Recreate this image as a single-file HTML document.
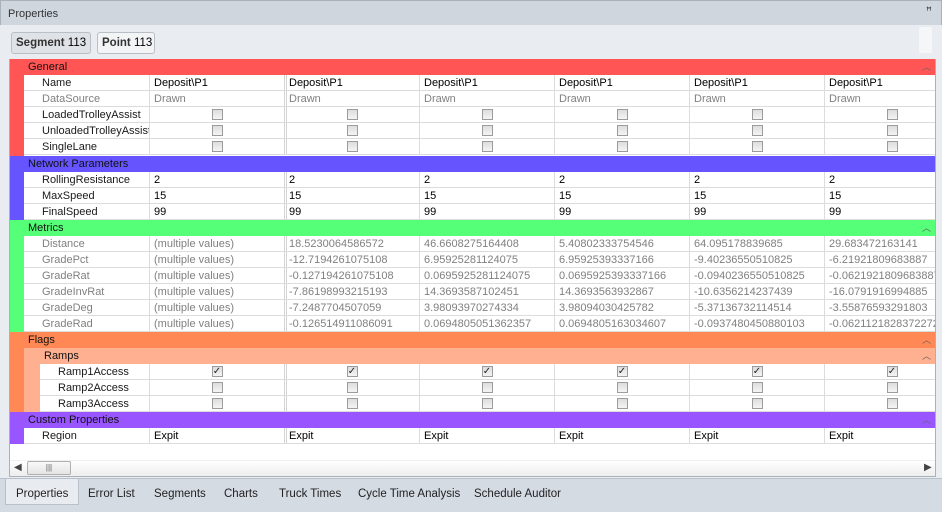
<!DOCTYPE html>
<html><head><meta charset="utf-8"><style>
*{box-sizing:border-box;margin:0;padding:0}
body{width:942px;height:512px;position:relative;overflow:hidden;background:#e9ecf0;font-family:"Liberation Sans",sans-serif;font-size:11px;color:#000}
.abs{position:absolute}
.title{left:0;top:0;width:942px;height:25px;background:#cfd6de;border:1px solid #a9b1bb;border-bottom:none}
.title span{position:absolute;left:7px;top:7px;color:#333}
.btn{top:32px;height:22px;border:1px solid #b9bfc6;border-radius:3px;padding:4px 4px 0 4px;font-size:11.5px;background:#f3f4f6;white-space:nowrap}
.btn b{color:#333}
.grid{left:9px;top:59px;width:927px;height:418px;background:#fff;border:1px solid #a9b1bb;border-top:none;overflow:hidden}
.row{position:absolute;left:14px;width:913px;height:16px;border-bottom:1px solid #dcdcdc;display:flex;background:#fff;white-space:nowrap;overflow:hidden}
.row div{height:15px;line-height:16px;overflow:hidden;flex-shrink:0}
.lb{width:125px;padding-left:18px;color:#1a1a1a}
.v{width:135px;border-left:1px solid #dcdcdc;padding-left:4px}
.v1{border-left:1px solid #dcdcdc}
.v2{border-left:3px double #d4d4d4;padding-left:2px}
.g div.v,.g .lb{color:#808080}
.cat{position:absolute;left:0;width:927px;height:16px;line-height:16px;padding-left:18px;color:#111}
.cat i{position:absolute;right:6px;top:0;font-style:normal;font-size:9px;color:#666}
.strip{position:absolute;left:0;width:14px}
.cb{display:block;width:11px;height:11px;margin:2px auto 0;border:1px solid #9c9c9c;background:linear-gradient(#ddd,#f4f4f4);position:relative;left:-2px;font-size:10px;line-height:9px;text-align:center;color:#222}
.tabs{left:0;top:478px;width:942px;height:34px;background:#d5dbe3;border-top:1px solid #b8c0ca}
.tab{position:absolute;top:9px;font-size:11.5px;color:#222}
</style></head><body>
<div class="abs title"><span>Properties</span><span style="left:925px;top:5px;font-size:10px">ꟸ</span></div>
<div class="abs" style="left:8px;top:25px;width:928px;height:34px;background:#e9ecf0"></div>
<div class="abs btn" style="left:11px;width:80px;background:#dfe3e8"><b>Segment</b> 113</div>
<div class="abs btn" style="left:97px;width:58px"><b>Point</b> 113</div>
<div class="abs" style="left:919px;top:27px;width:13px;height:26px;background:#f5f6f8"></div>

<div class="abs grid">
<div class="strip" style="top:0;height:97px;background:#ff5555"></div>
<div class="cat" style="top:0;background:#ff5555">General<i>︿</i></div>
<div class="row" style="top:16px"><div class="lb">Name</div><div class="v v1">Deposit\P1</div><div class="v v2">Deposit\P1</div><div class="v">Deposit\P1</div><div class="v">Deposit\P1</div><div class="v">Deposit\P1</div><div class="v">Deposit\P1</div></div>
<div class="row g" style="top:32px"><div class="lb">DataSource</div><div class="v v1">Drawn</div><div class="v v2">Drawn</div><div class="v">Drawn</div><div class="v">Drawn</div><div class="v">Drawn</div><div class="v">Drawn</div></div>
<div class="row" style="top:48px"><div class="lb">LoadedTrolleyAssist</div><div class="v v1"><span class="cb"></span></div><div class="v v2"><span class="cb"></span></div><div class="v"><span class="cb"></span></div><div class="v"><span class="cb"></span></div><div class="v"><span class="cb"></span></div><div class="v"><span class="cb"></span></div></div>
<div class="row" style="top:64px"><div class="lb">UnloadedTrolleyAssist</div><div class="v v1"><span class="cb"></span></div><div class="v v2"><span class="cb"></span></div><div class="v"><span class="cb"></span></div><div class="v"><span class="cb"></span></div><div class="v"><span class="cb"></span></div><div class="v"><span class="cb"></span></div></div>
<div class="row" style="top:80px"><div class="lb">SingleLane</div><div class="v v1"><span class="cb"></span></div><div class="v v2"><span class="cb"></span></div><div class="v"><span class="cb"></span></div><div class="v"><span class="cb"></span></div><div class="v"><span class="cb"></span></div><div class="v"><span class="cb"></span></div></div>

<div class="strip" style="top:97px;height:64px;background:#6655ff"></div>
<div class="cat" style="top:97px;background:#6655ff">Network Parameters</div>
<div class="row" style="top:113px"><div class="lb">RollingResistance</div><div class="v v1">2</div><div class="v v2">2</div><div class="v">2</div><div class="v">2</div><div class="v">2</div><div class="v">2</div></div>
<div class="row" style="top:129px"><div class="lb">MaxSpeed</div><div class="v v1">15</div><div class="v v2">15</div><div class="v">15</div><div class="v">15</div><div class="v">15</div><div class="v">15</div></div>
<div class="row" style="top:145px"><div class="lb">FinalSpeed</div><div class="v v1">99</div><div class="v v2">99</div><div class="v">99</div><div class="v">99</div><div class="v">99</div><div class="v">99</div></div>

<div class="strip" style="top:161px;height:112px;background:#55ff77"></div>
<div class="cat" style="top:161px;background:#55ff77">Metrics<i>︿</i></div>
<div class="row g" style="top:177px"><div class="lb">Distance</div><div class="v v1">(multiple values)</div><div class="v v2">18.5230064586572</div><div class="v">46.6608275164408</div><div class="v">5.40802333754546</div><div class="v">64.095178839685</div><div class="v">29.683472163141</div></div>
<div class="row g" style="top:193px"><div class="lb">GradePct</div><div class="v v1">(multiple values)</div><div class="v v2">-12.7194261075108</div><div class="v">6.95925281124075</div><div class="v">6.95925393337166</div><div class="v">-9.40236550510825</div><div class="v">-6.21921809683887</div></div>
<div class="row g" style="top:209px"><div class="lb">GradeRat</div><div class="v v1">(multiple values)</div><div class="v v2">-0.127194261075108</div><div class="v">0.0695925281124075</div><div class="v">0.0695925393337166</div><div class="v">-0.0940236550510825</div><div class="v">-0.0621921809683887</div></div>
<div class="row g" style="top:225px"><div class="lb">GradeInvRat</div><div class="v v1">(multiple values)</div><div class="v v2">-7.86198993215193</div><div class="v">14.3693587102451</div><div class="v">14.3693563932867</div><div class="v">-10.6356214237439</div><div class="v">-16.0791916994885</div></div>
<div class="row g" style="top:241px"><div class="lb">GradeDeg</div><div class="v v1">(multiple values)</div><div class="v v2">-7.2487704507059</div><div class="v">3.98093970274334</div><div class="v">3.98094030425782</div><div class="v">-5.37136732114514</div><div class="v">-3.55876593291803</div></div>
<div class="row g" style="top:257px"><div class="lb">GradeRad</div><div class="v v1">(multiple values)</div><div class="v v2">-0.126514911086091</div><div class="v">0.0694805051362357</div><div class="v">0.0694805163034607</div><div class="v">-0.0937480450880103</div><div class="v">-0.0621121828372272</div></div>

<div class="strip" style="top:273px;height:80px;background:#ff8855"></div>
<div class="cat" style="top:273px;background:#ff8855">Flags<i>︿</i></div>
<div class="abs" style="left:14px;top:289px;width:16px;height:64px;background:#ffb090"></div>
<div class="cat" style="top:289px;left:14px;width:913px;padding-left:20px;background:#ffb090">Ramps<i>︿</i></div>
<div class="row" style="top:305px;left:30px;width:897px"><div class="lb" style="width:109px">Ramp1Access</div><div class="v v1"><span class="cb">✓</span></div><div class="v v2"><span class="cb">✓</span></div><div class="v"><span class="cb">✓</span></div><div class="v"><span class="cb">✓</span></div><div class="v"><span class="cb">✓</span></div><div class="v"><span class="cb">✓</span></div></div>
<div class="row" style="top:321px;left:30px;width:897px"><div class="lb" style="width:109px">Ramp2Access</div><div class="v v1"><span class="cb"></span></div><div class="v v2"><span class="cb"></span></div><div class="v"><span class="cb"></span></div><div class="v"><span class="cb"></span></div><div class="v"><span class="cb"></span></div><div class="v"><span class="cb"></span></div></div>
<div class="row" style="top:337px;left:30px;width:897px"><div class="lb" style="width:109px">Ramp3Access</div><div class="v v1"><span class="cb"></span></div><div class="v v2"><span class="cb"></span></div><div class="v"><span class="cb"></span></div><div class="v"><span class="cb"></span></div><div class="v"><span class="cb"></span></div><div class="v"><span class="cb"></span></div></div>

<div class="strip" style="top:353px;height:32px;background:#9955ff"></div>
<div class="cat" style="top:353px;background:#9955ff">Custom Properties<i>︿</i></div>
<div class="row" style="top:369px"><div class="lb">Region</div><div class="v v1">Expit</div><div class="v v2">Expit</div><div class="v">Expit</div><div class="v">Expit</div><div class="v">Expit</div><div class="v">Expit</div></div>

<div class="abs" style="left:0;top:401px;width:927px;height:17px;background:linear-gradient(#fff,#ececec);border-top:1px solid #f0f0f0"></div>
<div class="abs" style="left:4px;top:403px;font-size:10px;color:#444">◀</div>
<div class="abs" style="left:17px;top:402px;width:44px;height:14px;border:1px solid #b0b0b0;border-radius:2px;background:linear-gradient(#f8f8f8,#e4e4e4);text-align:center;font-size:8px;line-height:12px;color:#555">|||</div>
<div class="abs" style="left:914px;top:403px;font-size:10px;color:#444">▶</div>
</div>

<div class="abs tabs">
<div class="abs" style="left:5px;top:0;width:74px;height:26px;background:#e8ebef;border:1px solid #b8c0ca;border-top:none"></div>
<div class="tab" style="left:16px">Properties</div>
<div class="tab" style="left:88px">Error List</div>
<div class="tab" style="left:154px">Segments</div>
<div class="tab" style="left:224px">Charts</div>
<div class="tab" style="left:279px">Truck Times</div>
<div class="tab" style="left:358px">Cycle Time Analysis</div>
<div class="tab" style="left:474px">Schedule Auditor</div>
</div>
</body></html>
